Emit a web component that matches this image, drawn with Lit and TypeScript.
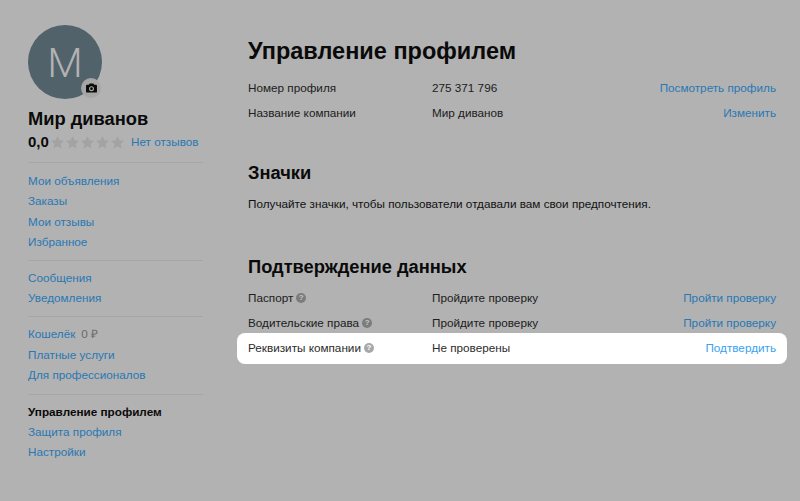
import { LitElement, html, css } from 'lit';
import { customElement } from 'lit/decorators.js';

const help = html`<span class="help">?</span>`;

@customElement('app-root')
export class AppRoot extends LitElement {
  static styles = css`
    :host {
      display: block;
      height: 501px;
      overflow: hidden;
      background: #b2b2b2;
      color: #0a0a0a;
      font: 11.72px/20px "Liberation Sans", Arial, sans-serif;
    }
    .page {
      display: flex;
      padding: 25px 24px 0 28px;
    }
    a {
      color: #2878b4;
      text-decoration: none;
      white-space: nowrap;
    }

    .side {
      width: 175px;
      margin-right: 45px;
      flex: none;
    }
    .avatar {
      position: relative;
      width: 74px;
      height: 74px;
      border-radius: 50%;
      background: #51626b;
      color: #b2b2b2;
      font-family: Roboto, sans-serif;
      font-size: 41px;
      font-weight: 300;
      line-height: 76px;
      text-align: center;
    }
    .camera {
      position: absolute;
      right: 1px;
      bottom: 1px;
      width: 20px;
      height: 20px;
      border-radius: 50%;
      background: #a6a6a6;
      display: flex;
      align-items: center;
      justify-content: center;
    }
    .name {
      margin-top: 8px;
      font-size: 18.3px;
      line-height: 24px;
      font-weight: 700;
    }
    .rating {
      display: flex;
      align-items: center;
      margin-top: 1px;
      height: 20px;
    }
    .score {
      font-size: 15px;
      font-weight: 700;
      width: 23px;
    }
    .stars {
      display: flex;
      gap: 2px;
      margin-right: 7px;
    }
    .group {
      border-top: 1px solid #a6a6a6;
      margin-top: 8px;
      padding-top: 7px;
    }
    .rating + .group {
      margin-top: 10px;
      margin-bottom: -1px;
      padding-top: 8px;
    }
    .group a, .group .current {
      display: block;
      line-height: 20.4px;
    }
    .current {
      font-weight: 700;
    }
    .wallet {
      display: flex;
      gap: 6px;
    }
    .wallet span {
      color: #6a6a6a;
      line-height: 20.4px;
    }

    .main {
      flex: 1;
      min-width: 0;
      padding-top: 8px;
    }
    h1 {
      margin: 0 0 6px;
      font-size: 23.5px;
      line-height: 36px;
    }
    h2 {
      margin: 0;
      font-size: 18.3px;
      line-height: 24px;
    }
    .row {
      display: grid;
      grid-template-columns: 184px 1fr auto;
      height: 25px;
      line-height: 25px;
      color: #202020;
    }
    .badges {
      margin-top: 36px;
    }
    .badges p {
      margin: 9px 0 0;
      color: #111;
      line-height: 20px;
    }
    .verify {
      margin-top: 41px;
    }
    .verify .rows {
      margin-top: 6px;
    }
    .label {
      display: flex;
      align-items: center;
      gap: 3px;
    }
    .help {
      width: 10px;
      height: 10px;
      border-radius: 50%;
      background: #7c7c7c;
      color: #c8c8c8;
      font-size: 8px;
      font-weight: 700;
      line-height: 10px;
      text-align: center;
    }
    .spot {
      margin: -2.5px -11px 0;
      padding: 0 11px;
      height: 31px;
      line-height: 30px;
      background: #fff;
      border-radius: 8px;
      color: #2c2c2c;
    }
    .spot a {
      color: #3aa2f0;
    }
    .spot .help {
      background: #a8a8a8;
      color: #fff;
    }
  `;

  private star() {
    return html`<svg width="13" height="13" viewBox="0 0 24 24"><path fill="#a3a3a3" d="M12 0l3.6 8 8.4.9-6.3 5.7 1.8 8.4L12 18.7 4.500 23l1.800-8.400L0 8.900 8.400 8z"/></svg>`;
  }

  render() {
    return html`
      <div class="page">
        <aside class="side">
          <div class="avatar">
            M
            <span class="camera">
              <svg width="11" height="10" viewBox="0 0 24 22"><path fill="#0a0a0a" fill-rule="evenodd" d="M8 1h8l2 3h4a2 2 0 0 1 2 2v13a2 2 0 0 1-2 2H2a2 2 0 0 1-2-2V6a2 2 0 0 1 2-2h4zM12 7a5.500 5.500 0 1 0 0 11 5.500 5.500 0 0 0 0-11zm0 2.500a3 3 0 1 1 0 6 3 3 0 0 1 0-6z"/></svg>
            </span>
          </div>
          <div class="name">Мир диванов</div>
          <div class="rating">
            <span class="score">0,0</span>
            <span class="stars">${[1, 2, 3, 4, 5].map(() => this.star())}</span>
            <a href="#">Нет отзывов</a>
          </div>
          <nav class="group">
            <a href="#">Мои объявления</a>
            <a href="#">Заказы</a>
            <a href="#">Мои отзывы</a>
            <a href="#">Избранное</a>
          </nav>
          <nav class="group">
            <a href="#">Сообщения</a>
            <a href="#">Уведомления</a>
          </nav>
          <nav class="group">
            <div class="wallet"><a href="#">Кошелёк</a><span>0 ₽</span></div>
            <a href="#">Платные услуги</a>
            <a href="#">Для профессионалов</a>
          </nav>
          <nav class="group">
            <div class="current">Управление профилем</div>
            <a href="#">Защита профиля</a>
            <a href="#">Настройки</a>
          </nav>
        </aside>

        <main class="main">
          <h1>Управление профилем</h1>
          <div class="row"><span>Номер профиля</span><span>275 371 796</span><a href="#">Посмотреть профиль</a></div>
          <div class="row"><span>Название компании</span><span>Мир диванов</span><a href="#">Изменить</a></div>

          <section class="badges">
            <h2>Значки</h2>
            <p>Получайте значки, чтобы пользователи отдавали вам свои предпочтения.</p>
          </section>

          <section class="verify">
            <h2>Подтверждение данных</h2>
            <div class="rows">
              <div class="row"><span class="label">Паспорт ${help}</span><span>Пройдите проверку</span><a href="#">Пройти проверку</a></div>
              <div class="row"><span class="label">Водительские права ${help}</span><span>Пройдите проверку</span><a href="#">Пройти проверку</a></div>
              <div class="row spot"><span class="label">Реквизиты компании ${help}</span><span>Не проверены</span><a href="#">Подтвердить</a></div>
            </div>
          </section>
        </main>
      </div>
    `;
  }
}
